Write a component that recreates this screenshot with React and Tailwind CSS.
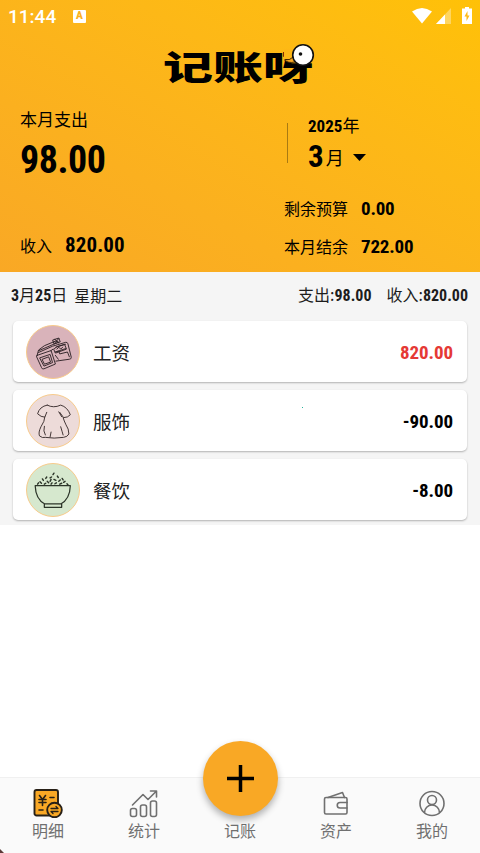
import clsx from 'clsx'

const num = "font-['Roboto_Condensed','Roboto','Noto_Sans_CJK_SC',sans-serif] font-bold [font-stretch:75%]"

function WalletSketch() {
  return (
    <svg viewBox="0 0 54 54" className="size-full" fill="none" stroke="#32262b" strokeWidth="1" strokeLinejoin="round" strokeLinecap="round">
      <path d="M10.5 30.500 25 25.500 29.500 39.500 17.500 44.500Q15.500 45 15 43L10 32Q9.500 31 10.500 30.500Z" />
      <path d="M13.500 33 24 29.500 26.500 38 18 41.500ZM16 34.500 22.500 32 24.500 37.500 18.500 39.500Z" />
      <path d="M10.500 30.500 12 25 18 20.500 30 15.500 32.500 17.500M12 27.500 26.500 21 40 17Q42 16.500 42.500 18.500L46 32.500Q46 34.500 44 34.500L30 36.500M25 25.500 27 24M12.500 25.500 31 17.500" />
      <path d="m27 14.500 6-2 1.500 4-6 2zM29 14l4 3M33 13l-4 4.500M28 24l3-2.500 8-2.500 2 5-11 4zM31 24l2-2 2 2 2-2M29 27l4-1 1 3 8-2 2 5M29.500 30.500l3 4M30 22l10-3M31 26.500l9-3" />
    </svg>
  )
}

function DressSketch() {
  return (
    <svg viewBox="0 0 54 54" className="size-full" fill="none" stroke="#3c3030" strokeWidth="1" strokeLinejoin="round" strokeLinecap="round">
      <path d="M21 10.500Q27.500 14 35 10.500Q42 12.500 45 20.500Q42.500 23.500 38 23.500L34 18M21 10.500Q13 12 11 19.500Q14.500 23 18.500 23L20.500 18" />
      <path d="M18.500 23Q18.500 27 14.500 33Q11.500 39 13 42.500Q16 45 19 44Q28 45.500 38 44Q42 43.500 43.500 40.500Q43.500 35 40.500 31Q38.500 27 37.500 23.500" />
      <path d="M18 32.500q-1.500 5 1 9M25 38.500l-1 5M35 33q1.500 5 2.500 8.500M33 17.500l3 5" />
    </svg>
  )
}

function RiceSketch() {
  return (
    <svg viewBox="0 0 54 54" className="size-full" fill="none" stroke="#2c3529" strokeWidth="1.300" strokeLinejoin="round" strokeLinecap="round">
      <path d="M8.500 22.500H45Q44.500 36.500 35 41.500H18.500Q9 36.500 8.500 22.500ZM18 41.500V45H36V41.500" />
      <path strokeWidth="1.500" d="m11 21 1-1.500M13.500 18.500l1.500 1.500M17 17l-1-1.500M18 21l1.500-1M19.500 15l1-1.500M21 18l1.500 1.500M24 14.500l1.500-1M24 18l1-2M25 21l1-1.500M27 11l1-1.500M28 16l2 1M29 20.500l1.500-1M31.500 12.500l1 1.500M33 18l1.500-1.500M34 21l2-1M36.500 15l1 1.500M38 19l1.500-1M41.500 20.500l1 1" />
    </svg>
  )
}

const records = [
  { name: '工资', amount: '820.00', income: true, bg: 'bg-[#d9b3ba]', Icon: WalletSketch },
  { name: '服饰', amount: '-90.00', bg: 'bg-[#eddbd9]', Icon: DressSketch },
  { name: '餐饮', amount: '-8.00', bg: 'bg-[#d6e8ce]', Icon: RiceSketch },
]

function StatusBar() {
  return (
    <div className="flex h-[33px] items-center pl-[8px] pr-[8px] text-white">
      <span className="w-[65px] font-['Roboto',sans-serif] text-[19px] font-medium leading-none">11:44</span>
      <span className="-mt-px flex h-[13px] w-[13px] items-center justify-center rounded-[1px] bg-white font-['Roboto'] text-[10px] font-black leading-none text-[#fbb11d]">A</span>
      <div className="-mt-[2px] ml-auto flex items-center">
        <svg width="20" height="16" viewBox="0 0 20 16" fill="currentColor">
          <path d="M0 3.500Q10-3.500 20 3.500L10 15.500Z" />
        </svg>
        <svg width="15" height="16" viewBox="0 0 15 16" className="ml-[4px]" fill="currentColor">
          <path d="M15 0V16H0Z" opacity=".35" />
          <path d="M9 6.500V16H0Z" />
        </svg>
        <svg width="10" height="17" viewBox="0 0 10 17" className="ml-[11px]" fill="currentColor">
          <path d="M3 0h4v1.500h3V17H0V1.500h3z" />
          <path d="M5.500 4 2.500 9.500h2V14l3-5.500h-2z" fill="#fdb913" />
        </svg>
      </div>
    </div>
  )
}

function Logo() {
  return (
    <div className="relative mx-auto h-[55px] w-[154px]">
      <h1 className="origin-left scale-x-[1.25] scale-y-[0.86] whitespace-nowrap pt-[7px] font-['Noto_Sans_CJK_SC',sans-serif] text-[40px] font-black leading-[52px] text-black">记账呀</h1>
      {/* duck head sits on the last character, in place of its top bar */}
      <svg width="32" height="26" viewBox="0 0 32 26" className="absolute left-[121px] top-[10px]">
        <path d="M0 6H31V16H0z" fill="#feb716" />
        <path d="M10 13.500Q6 17.500 0.500 17Q4 20.500 11 19" fill="#f7a823" stroke="#4d2c05" strokeWidth="1" />
        <circle cx="19" cy="12" r="10.300" fill="#fff" stroke="#111" strokeWidth="1.600" />
        <circle cx="16.500" cy="11" r="1.800" fill="#111" />
      </svg>
    </div>
  )
}

function Summary() {
  return (
    <section className="flex pl-[20px] text-black">
      <div className="flex w-[264px] flex-col">
        <div className="mt-[19px] text-[17px] leading-[24px]">本月支出</div>
        <div className={clsx(num, 'mt-[5px] text-[38px] leading-[48px] tracking-[-0.5px]')}>98.00</div>
        <div className="mt-[49px] flex items-center leading-[24px]">
          <span className="w-[45px] text-[16px]">收入</span>
          <span className={clsx(num, '-mt-px text-[21px] tracking-[0.1px]')}>820.00</span>
        </div>
      </div>
      <div className="flex flex-col">
        <div className="mt-[25px] flex">
          <div className="ml-[3px] mt-[10px] h-[40px] w-px bg-[#a97a12]" />
          <div className="ml-[20px]">
            <div className="text-[17px] leading-[24px]"><span className={num}>2025</span>年</div>
            <div className="flex h-[36px] items-center">
              <span className={clsx(num, 'mt-[2px] text-[31px] leading-[36px]')}>3</span>
              <span className="ml-[2px] mt-[2px] text-[18px] leading-[24px]">月</span>
              <svg width="13" height="7" viewBox="0 0 13 7" className="ml-[9px] mt-[2px]"><path d="M0 0h13L6.500 7z" /></svg>
            </div>
          </div>
        </div>
        <div className="mt-[21px] flex items-center leading-[24px]">
          <span className="w-[77px] text-[16px]">剩余预算</span>
          <span className={clsx(num, 'mt-[2px] text-[19px] tracking-[-0.2px]')}>0.00</span>
        </div>
        <div className="mt-[12px] flex items-center leading-[24px]">
          <span className="w-[77px] text-[16px]">本月结余</span>
          <span className={clsx(num, 'mt-[2px] text-[19px] tracking-[-0.2px]')}>722.00</span>
        </div>
      </div>
    </section>
  )
}

function RecordCard({ name, amount, income, bg, Icon }) {
  return (
    <div className="flex h-[61px] items-center rounded-[5px] bg-white pl-[13px] pr-[14px] shadow-[0_1px_2px_rgba(0,0,0,0.28)]">
      <div className={clsx('size-[54px] overflow-hidden rounded-full border-[1.5px] border-[#f8cb8b]', bg)}>
        <Icon />
      </div>
      <span className="ml-[13px] text-[18.5px] leading-[26px] text-[#222]">{name}</span>
      <span className={clsx(num, 'ml-auto pt-[3px] text-[19px] tracking-[-0.1px]', income ? 'text-[#e53935]' : 'text-black')}>{amount}</span>
    </div>
  )
}

function DayList() {
  return (
    <section className="relative h-[253px] bg-[#f5f5f5] text-[#1d1d1d]">
      <div className="flex h-[49px] items-center pb-[3px] pl-[11px] pr-[12px] text-[16px]">
        <span><b className={num}>3</b>月<b className={num}>25</b>日</span>
        <span className="ml-[7px]">星期二</span>
        <span className="ml-auto">支出:<b className={num}>98.00</b></span>
        <span className="ml-[15px]">收入:<b className={num}>820.00</b></span>
      </div>
      <div className="flex flex-col gap-[8px] px-[13px]">
        {records.map((r) => <RecordCard key={r.name} {...r} />)}
      </div>
      <i className="absolute left-[302px] top-[135px] size-px bg-[#27b49b]" />
    </section>
  )
}

const line = { width: 30, height: 30, viewBox: '0 0 30 30', fill: 'none', stroke: 'currentColor', strokeWidth: 1.6, strokeLinecap: 'round', strokeLinejoin: 'round' }

const DetailIcon = () => (
  <svg {...line} stroke="#272017">
    <rect x="1.500" y="2" width="23.500" height="25.500" rx="2" fill="#f9a825" strokeWidth="1.900" />
    <path d="m6.500 7.500 3 4 3-4M6 11.500h7M6 14.500h7M9.500 11.500v6M17 9.500h4M6 22h4" />
    <circle cx="21.500" cy="22" r="7.300" fill="#f9a825" strokeWidth="1.900" />
    <path d="M18 20.500h7l-2-2M25 23.500h-7l2 2" strokeWidth="1.300" />
  </svg>
)

const StatsIcon = () => (
  <svg {...line}>
    <path d="M3.500 17 14 6.500l5 5L27.500 3M21.500 3h6v6" />
    <rect x="1.500" y="20.500" width="6" height="8" rx="2" />
    <rect x="11.500" y="17" width="6" height="11.500" rx="2" />
    <rect x="21.500" y="13" width="6" height="15.500" rx="2" />
  </svg>
)

const AssetIcon = () => (
  <svg {...line}>
    <rect x="3.500" y="9.500" width="22.500" height="16.500" rx="1.500" />
    <path d="M7 9.500 21.500 4.500l2 5M26 14.500h-7a2.700 2.700 0 0 0 0 5.500h7" />
  </svg>
)

const MineIcon = () => (
  <svg {...line}>
    <circle cx="15" cy="15.500" r="12" />
    <circle cx="15" cy="12" r="4.500" />
    <path d="M7.500 24.500a7.500 7.500 0 0 1 15 0" />
  </svg>
)

const tabs = [
  { label: '明细', Icon: DetailIcon },
  { label: '统计', Icon: StatsIcon },
  { label: '记账' },
  { label: '资产', Icon: AssetIcon },
  { label: '我的', Icon: MineIcon },
]

function TabBar() {
  return (
    <nav className="relative grid h-[76px] grid-cols-5 border-t border-[#f0f0f0] bg-[#fafafa] text-[#707070]">
      {tabs.map(({ label, Icon }) => (
        <div key={label} className="flex flex-col items-center pt-[10px]">
          <div className="h-[30px]">{Icon && <Icon />}</div>
          <span className="text-[16px] leading-[24px]">{label}</span>
        </div>
      ))}
      <button className="absolute left-[202.5px] top-[-37px] flex size-[75px] items-center justify-center rounded-full bg-[#f9a825] shadow-[0_4px_7px_rgba(0,0,0,0.3)]">
        <svg width="27" height="27" viewBox="0 0 27 27" stroke="#000" strokeWidth="3.500"><path d="M13.500 0v27M0 13.500h27" /></svg>
      </button>
      <svg width="4" height="4" className="absolute bottom-0 left-0"><path d="M0 0 4 4H0z" fill="#5b3a38" /></svg>
    </nav>
  )
}

export default function App() {
  return (
    <main className="flex h-[853px] w-[480px] flex-col overflow-hidden bg-white font-['Noto_Sans_CJK_SC',sans-serif]">
      <header className="h-[272px] bg-linear-to-tr from-[#f9a825] to-[#ffc107]">
        <StatusBar />
        <Logo />
        <Summary />
      </header>
      <DayList />
      <div className="flex-1" />
      <TabBar />
    </main>
  )
}
